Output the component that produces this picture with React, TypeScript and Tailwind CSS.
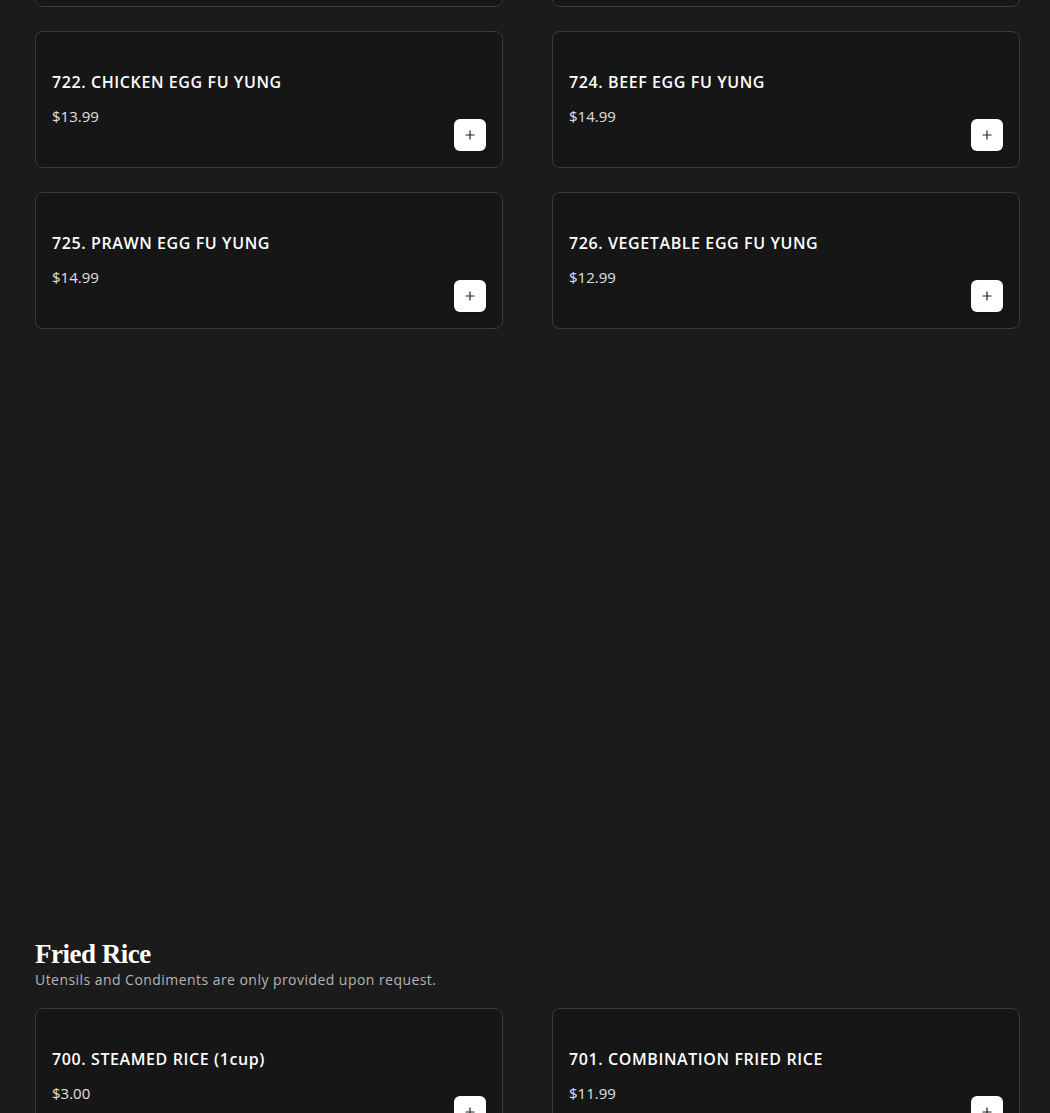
import { Plus } from "lucide-react";

type Item = { name: string; price: string };

const eggFuYung: Item[][] = [
  [
    { name: "720. EGG FU YUNG", price: "$12.99" },
    { name: "721. BBQ PORK EGG FU YUNG", price: "$13.99" },
  ],
  [
    { name: "722. CHICKEN EGG FU YUNG", price: "$13.99" },
    { name: "724. BEEF EGG FU YUNG", price: "$14.99" },
  ],
  [
    { name: "725. PRAWN EGG FU YUNG", price: "$14.99" },
    { name: "726. VEGETABLE EGG FU YUNG", price: "$12.99" },
  ],
];

const friedRice: Item[] = [
  { name: "700. STEAMED RICE (1cup)", price: "$3.00" },
  { name: "701. COMBINATION FRIED RICE", price: "$11.99" },
];

const Card = ({ item }: { item: Item }) => {
  return (
    <div className="flex items-end justify-between rounded-lg border border-[#3a3a3a] bg-[#161616] p-4">
      <div className="pt-[22px] pb-[25px]">
        <h3 className="text-[16px] leading-6 font-semibold text-white tracking-[0.6px]">
          {item.name}
        </h3>
        <p className="mt-3 text-[15px] leading-5 text-[#e0e0e0]">{item.price}</p>
      </div>
      <button className="flex h-8 w-8 items-center justify-center rounded-md bg-white text-[#222] shadow">
        <Plus size={14} strokeWidth={2} />
      </button>
    </div>
  );
};

export default function App() {
  return (
    <div
      className="min-h-screen overflow-hidden bg-[#1b1b1b] pl-[35px] pr-[30px]"
      style={{ fontFamily: '"Open Sans", "Liberation Sans", sans-serif' }}
    >
      <div className="mt-[-130px] flex flex-col gap-[24px]">
        {eggFuYung.map((row, i) => (
          <div key={i} className="grid grid-cols-2 gap-[49px]">
            {row.map((item) => (
              <Card key={item.name} item={item} />
            ))}
          </div>
        ))}
      </div>

      <div className="mt-[609px]">
        <h2
          className="text-[27px] leading-8 font-black text-white tracking-[-0.5px]"
          style={{ fontFamily: '"Liberation Serif", "DejaVu Serif", serif' }}
        >
          Fried Rice
        </h2>
        <p className="text-[14px] leading-5 text-[#b5b5b5] tracking-[0.45px]">
          Utensils and Condiments are only provided upon request.
        </p>
        <div className="mt-[18px] grid grid-cols-2 gap-[49px]">
          {friedRice.map((item) => (
            <Card key={item.name} item={item} />
          ))}
        </div>
      </div>
    </div>
  );
}
